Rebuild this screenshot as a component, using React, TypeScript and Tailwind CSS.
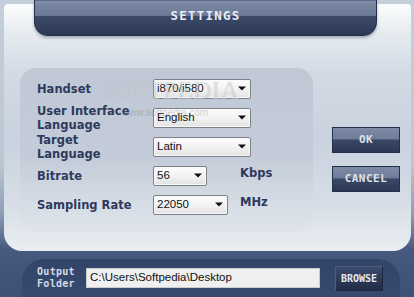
import React from 'react'

const pixelFont = "font-['DejaVu_Sans_Mono','Liberation_Mono',monospace] font-bold"
const labelFont = "font-['DejaVu_Sans','Liberation_Sans',sans-serif] font-bold text-[11.5px] text-[#2d3a5d]"

function Dropdown({ value, width }: { value: string; width: string }) {
  return (
    <div
      className={`flex h-[20px] items-center justify-between rounded-[2px] border border-[#7d8188] bg-[linear-gradient(to_bottom,#fdfdfd_0%,#f1f1f1_55%,#e2e2e2_100%)] pl-[3px] pr-[3px] shadow-[inset_0_0_0_1px_#f8f8f8] ${width}`}
    >
      <span className="font-['Liberation_Sans',sans-serif] text-[11.5px] leading-none text-[#111]">{value}</span>
      <svg width="8" height="5" viewBox="0 0 8 5" className="mb-[1px] mr-[1px]">
        <path d="M0 0.5h8L4 4.5z" fill="#111" />
      </svg>
    </div>
  )
}

function NavButton({ label, className }: { label: string; className?: string }) {
  return (
    <div
      className={`flex items-center justify-center border border-[#25314a] bg-[linear-gradient(to_bottom,#7d8ba6_0%,#6e7d99_45%,#3a4866_50%,#2c3855_100%)] ${pixelFont} text-[11px] tracking-[0.5px] text-[#dde1e9] ${className ?? ''}`}
    >
      {label}
    </div>
  )
}

export default function App() {
  const rows = [
    { label: ['Handset'], value: 'i870/i580', width: 'w-[98px]' },
    { label: ['User Interface', 'Language'], value: 'English', width: 'w-[98px]' },
    { label: ['Target', 'Language'], value: 'Latin', width: 'w-[98px]' },
    { label: ['Bitrate'], value: '56', width: 'w-[54px]', unit: 'Kbps' },
    { label: ['Sampling Rate'], value: '22050', width: 'w-[75px]', unit: 'MHz' },
  ]

  return (
    <div className="relative flex h-[297px] w-[414px] flex-col overflow-hidden bg-[linear-gradient(to_bottom,#c5cfdb_0%,#bcc7d4_55%,#8e9db5_72%,#46597e_84%,#3d5177_100%)] pt-[4px]">
      {/* main panel */}
      <div className="ml-[4px] mr-[3px] flex h-[247px] rounded-t-[4px] rounded-b-[18px] bg-[linear-gradient(to_bottom,#fcfdfd_0%,#e6ebf0_12%,#d3dae4_28%,#c9d2de_55%,#d6dde6_80%,#eaeef2_100%)] pl-[16px] pt-[64px]">
        <div className="flex h-[164px] w-[293px] flex-col gap-[9px] rounded-[16px] bg-[linear-gradient(to_bottom,#bfc8d4_0%,#c3ccd8_55%,#d4dbe4_80%,#e0e5ec_100%)] pl-[17px] pt-[11px]">
          {rows.map((row) => (
            <div key={row.value} className="flex h-[20px] items-center">
              <div className={`w-[116px] ${labelFont}`}>
                {row.label.map((l) => (
                  <div key={l} className="leading-[14px]">{l}</div>
                ))}
              </div>
              <div className="w-[87px]">
                <Dropdown value={row.value} width={row.width} />
              </div>
              {row.unit && <span className={`mb-[4px] ${labelFont}`}>{row.unit}</span>}
            </div>
          ))}
        </div>
        <div className="ml-[19px] mt-[59px] flex flex-col gap-[13px]">
          <NavButton label="OK" className="h-[26px] w-[68px]" />
          <NavButton label="CANCEL" className="h-[26px] w-[68px]" />
        </div>
      </div>

      {/* output folder bar */}
      <div className="ml-[22px] mr-[14px] mt-[8px] flex h-[38px] items-center rounded-t-[22px] bg-[linear-gradient(to_bottom,#32446a_0%,#374a6f_100%)] pl-[15px]">
        <div className={`w-[49px] text-[10px] leading-[12px] tracking-[0.3px] text-[#d5dae3] ${pixelFont}`}>
          <div>Output</div>
          <div>Folder</div>
        </div>
        <div className="flex h-[20px] w-[234px] items-center border border-[#c8cbd0] bg-[#efefef] pl-[3px] font-['Liberation_Sans',sans-serif] text-[11.5px] text-[#111]">
          C:\Users\Softpedia\Desktop
        </div>
        <div
          className={`ml-[15px] flex h-[25px] w-[48px] items-center justify-center border border-[#4c5d80] border-r-[#1e2840] border-b-[#1e2840] bg-[linear-gradient(to_bottom,#3b4b6e_0%,#2c3a58_55%,#222d47_100%)] text-[10px] text-[#e6e9ef] ${pixelFont}`}
        >
          BROWSE
        </div>
      </div>

      {/* header tab */}
      <div
        className={`absolute left-[34px] top-0 flex h-[36px] w-[343px] justify-center rounded-b-[14px] border border-t-0 border-[#243049] bg-[linear-gradient(to_bottom,#4d5d7f_0%,#8492ac_5%,#7886a1_10%,#6c7b97_44%,#3c4a68_47%,#2c3956_100%)] pt-[10px] text-[12.5px] leading-[12px] tracking-[1.2px] text-[#e8ecf2] shadow-[0_2px_3px_rgba(40,50,70,0.35)] ${pixelFont}`}
      >
        SETTINGS
      </div>

      {/* watermark */}
      <div className="pointer-events-none absolute left-[100px] top-[78px] font-['Liberation_Serif',serif] text-[25px] leading-none tracking-[0.5px] text-white/35 [text-shadow:0_0_1px_rgba(120,130,145,0.4)]">
        SOFTPEDIA
        <span className="absolute -right-[10px] -top-[8px] font-['Liberation_Sans',sans-serif] text-[8px] text-white/50">™</span>
      </div>
      <div className="pointer-events-none absolute left-[122px] top-[108px] font-['Liberation_Sans',sans-serif] text-[10px] leading-none text-[#6e7682]/35">
        www.softpedia.com
      </div>
    </div>
  )
}
